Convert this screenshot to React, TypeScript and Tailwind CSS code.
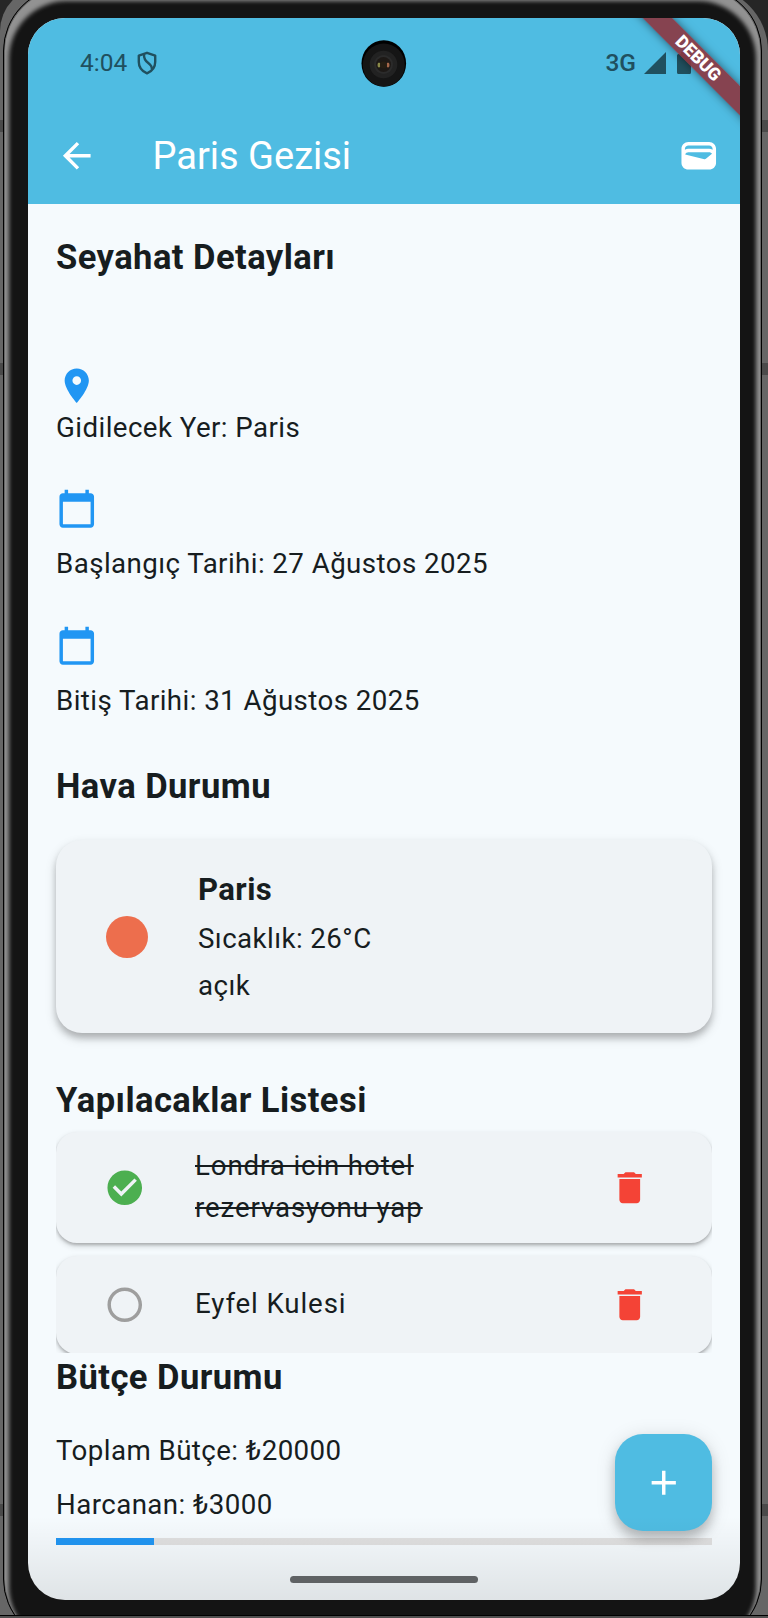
import React from "react";
import {
  MdAdd,
  MdArrowBack,
  MdCalendarToday,
  MdCheckCircle,
  MdDelete,
  MdPlace,
  MdRadioButtonUnchecked,
} from "react-icons/md";

const ICON = 41.5;

function Heading({ children, className = "" }: { children: React.ReactNode; className?: string }) {
  return (
    <h2 className={`whitespace-nowrap text-[34.6px] font-bold tracking-[0.43px] ${className}`}>{children}</h2>
  );
}

function StatusBar() {
  return (
    <div className="flex h-[90px] items-center pl-[52px] pr-[49px] text-[#20505f]">
      <span className="text-[24.5px] leading-none">4:04</span>
      <svg className="ml-[9px]" width="22" height="24" viewBox="0 0 22 24" fill="none" stroke="currentColor" strokeWidth="2.4" strokeLinejoin="round">
        <path d="M11 1.8 19.2 4.6V11c0 5.4-3.3 9.3-8.2 11.4C6.1 20.3 2.8 16.4 2.8 11V4.6Z" />
        <path d="M8 3.2C7.8 8 9.2 9.7 12 11.8S16.3 16 15.8 18.6" />
      </svg>
      <div className="flex-1" />
      <span className="text-[24.5px] font-medium leading-none">3G</span>
      <svg className="ml-[8px]" width="22" height="22" viewBox="0 0 22 22" fill="currentColor">
        <path d="M22 0v22H0Z" />
      </svg>
      <svg className="ml-[11px]" width="14" height="22" viewBox="0 0 14 22" fill="currentColor">
        <path d="M4 0h6v2h2.5q1.5 0 1.5 1.5v17q0 1.5-1.5 1.5h-11Q0 22 0 20.500v-17Q0 2 1.500 2H4Z" />
      </svg>
    </div>
  );
}

function Camera() {
  return (
    <svg className="absolute left-[333px] top-[22px]" width="46" height="47" viewBox="0 0 46 47">
      <ellipse cx="22.8" cy="23.5" rx="22.3" ry="23.2" fill="#000" />
      <ellipse cx="22.8" cy="25" rx="21" ry="21.5" fill="#151515" />
      <circle cx="22.5" cy="24.5" r="13.8" fill="#222" />
      <circle cx="22.5" cy="24.5" r="9.5" fill="#2b2b2b" />
      <circle cx="22.5" cy="24.5" r="7.5" fill="#1d1916" />
      <ellipse cx="18" cy="25" rx="1.5" ry="2.5" fill="#8a8a49" />
      <ellipse cx="27" cy="25" rx="1.5" ry="2.5" fill="#a5674a" />
      <circle cx="22.5" cy="25" r="3.5" fill="#251e14" />
    </svg>
  );
}

function AppBar() {
  return (
    <div className="flex h-24 items-center pl-7 pr-[21px] text-white">
      <MdArrowBack size={ICON} />
      <h1 className="ml-[55px] flex-1 text-[38px] leading-[48px]">Paris Gezisi</h1>
      <svg width={ICON} height={ICON} viewBox="0 0 24 24" fill="currentColor">
        <path d="M18 4H6C3.79 4 2 5.79 2 8v8c0 2.21 1.79 4 4 4h12c2.21 0 4-1.79 4-4V8c0-2.21-1.79-4-4-4zm-1.86 9.77c-.24.2-.57.28-.88.2L4.15 11.25C4.45 10.52 5.16 10 6 10h12c.67 0 1.26.34 1.63.84l-3.49 2.93zM6 6h12c1.1 0 2 .9 2 2v.55c-.59-.34-1.27-.55-2-.55H6c-.73 0-1.41.21-2 .55V8c0-1.1.9-2 2-2z" />
      </svg>
    </div>
  );
}

function Detail({ icon, text, className }: { icon: React.ReactNode; text: string; className: string }) {
  return (
    <div className={`flex flex-col text-[27.7px] leading-[42px] tracking-[0.43px] ${className}`}>
      <div className="h-[42px] text-[#2196f3]">{icon}</div>
      <p className="whitespace-nowrap">{text}</p>
    </div>
  );
}

function Todo({ done, className, children }: { done?: boolean; className: string; children: React.ReactNode }) {
  return (
    <div
      className={`flex shrink-0 items-center rounded-[21px] bg-[#eff3f6] pl-[48px] pr-[62px] shadow-[0_2px_3px_rgba(0,0,0,0.2),0_3px_6px_rgba(0,0,0,0.16)] ${className}`}
    >
      {done ? (
        <MdCheckCircle size={ICON} className="text-[#4caf50]" />
      ) : (
        <MdRadioButtonUnchecked size={ICON} className="text-[#9e9e9e]" />
      )}
      <p
        className={`mb-0.5 ml-[49.5px] w-[300px] text-[27.7px] leading-[41.5px] tracking-[0.865px] ${
          done ? "line-through decoration-[1.5px]" : ""
        }`}
      >
        {children}
      </p>
      <MdDelete size={ICON} className="ml-auto text-[#f44336]" />
    </div>
  );
}

function Screen() {
  return (
    <div className="relative h-[1582px] w-[712px] overflow-hidden rounded-[37px] bg-[#f5fafd] text-[#171d1f]">
      <header className="h-[186px] bg-[#4fbce2]">
        <StatusBar />
        <AppBar />
      </header>

      <main className="flex flex-col px-7">
        <Heading className="mt-[27px] leading-[52px]">Seyahat Detayları</Heading>
        <Detail className="mt-[82px]" icon={<MdPlace size={ICON} />} text="Gidilecek Yer: Paris" />
        <Detail className="mt-[39px] gap-[13px]" icon={<MdCalendarToday size={ICON} />} text="Başlangıç Tarihi: 27 Ağustos 2025" />
        <Detail className="mt-[40px] gap-[13px]" icon={<MdCalendarToday size={ICON} />} text="Bitiş Tarihi: 31 Ağustos 2025" />

        <Heading className="mt-[38px] leading-[52px]">Hava Durumu</Heading>
        <section className="mt-[28px] flex h-[193px] items-center rounded-[26px] bg-[#eff3f6] pl-[50px] shadow-[0_5px_6px_rgba(0,0,0,0.18),0_5px_12px_rgba(0,0,0,0.16)]">
          <div className="size-[42px] rounded-full bg-[#ed6e4d]" />
          <div className="ml-[50px] flex flex-col text-[27.7px] leading-[46.5px] tracking-[0.43px]">
            <h3 className="text-[31.1px] font-bold leading-[52px] tracking-[0.43px]">Paris</h3>
            <p>Sıcaklık: 26°C</p>
            <p>açık</p>
          </div>
        </section>

        <Heading className="mt-[41px] leading-[52px]">Yapılacaklar Listesi</Heading>
        <section className="flex h-[227px] flex-col gap-[13px] overflow-hidden pt-[6px]">
          <Todo done className="h-[111px]">
            Londra icin hotel
            <br />
            rezervasyonu yap
          </Todo>
          <Todo className="h-[98px]">Eyfel Kulesi</Todo>
        </section>

        <Heading className="leading-[48px]">Bütçe Durumu</Heading>
        <div className="mt-[28.5px] flex flex-col gap-3 text-[27.7px] leading-[42px] tracking-[0.43px]">
          <p>Toplam Bütçe: ₺20000</p>
          <p>Harcanan: ₺3000</p>
        </div>
        <div className="mt-[12.5px] h-[7px] bg-[#e0e0e0]">
          <div className="h-full w-[15%] bg-[#2196f3]" />
        </div>
      </main>

      <button className="absolute bottom-[69px] right-7 flex size-[97px] items-center justify-center rounded-[28px] bg-[#4fbce2] text-white shadow-[0_8px_11px_rgba(0,0,0,0.2),0_3px_20px_rgba(0,0,0,0.13)]">
        <MdAdd size={ICON} />
      </button>
      <div className="pointer-events-none absolute inset-x-0 bottom-0 h-[84px] bg-linear-to-b from-transparent to-black/[0.09]" />
      <div className="absolute bottom-[17px] left-[262px] h-[7px] w-[188px] rounded-full bg-[#5f6264]" />
      <Camera />
      <div className="absolute left-[570px] top-[30px] flex h-[20.8px] w-[200px] rotate-45 items-center justify-center bg-[#8c3540]/[0.9] text-[17.6px] font-black leading-none text-white shadow-[0_0_10px_rgba(0,0,0,0.5)]">
        DEBUG
      </div>
    </div>
  );
}

function SideKey({ className }: { className: string }) {
  return <div className={`absolute h-3 bg-[#4a4a4a] ${className}`} />;
}

export default function App() {
  return (
    <div className="flex h-[1618px] w-[768px] flex-col overflow-hidden bg-[#262626] font-[Roboto,'Noto_Sans',sans-serif]">
      <div className="h-[1616px] overflow-hidden border-b border-black">
        <div className="relative -mt-[13px] h-[1660px] w-full rounded-tl-[44px] rounded-tr-[64px] bg-[#666] pl-[3px] pr-[6px]">
          <SideKey className="left-0 top-[133px] w-[3px]" />
          <SideKey className="left-0 top-[376px] w-[3px]" />
          <SideKey className="left-0 top-[1517px] w-[3px]" />
          <SideKey className="right-0 top-[133px] w-[6px]" />
          <SideKey className="right-0 top-[376px] w-[6px]" />
          <SideKey className="right-0 top-[1517px] w-[6px]" />
          <div className="relative h-[1656px] rounded-[64px] border border-black bg-[#141414] pl-6 pt-[30px] shadow-[inset_0_0_0_1px_#666,inset_0_8px_4px_5px_#929292]">
            <Screen />
          </div>
        </div>
      </div>
      <div className="h-[2px] bg-[#505050]" />
    </div>
  );
}
